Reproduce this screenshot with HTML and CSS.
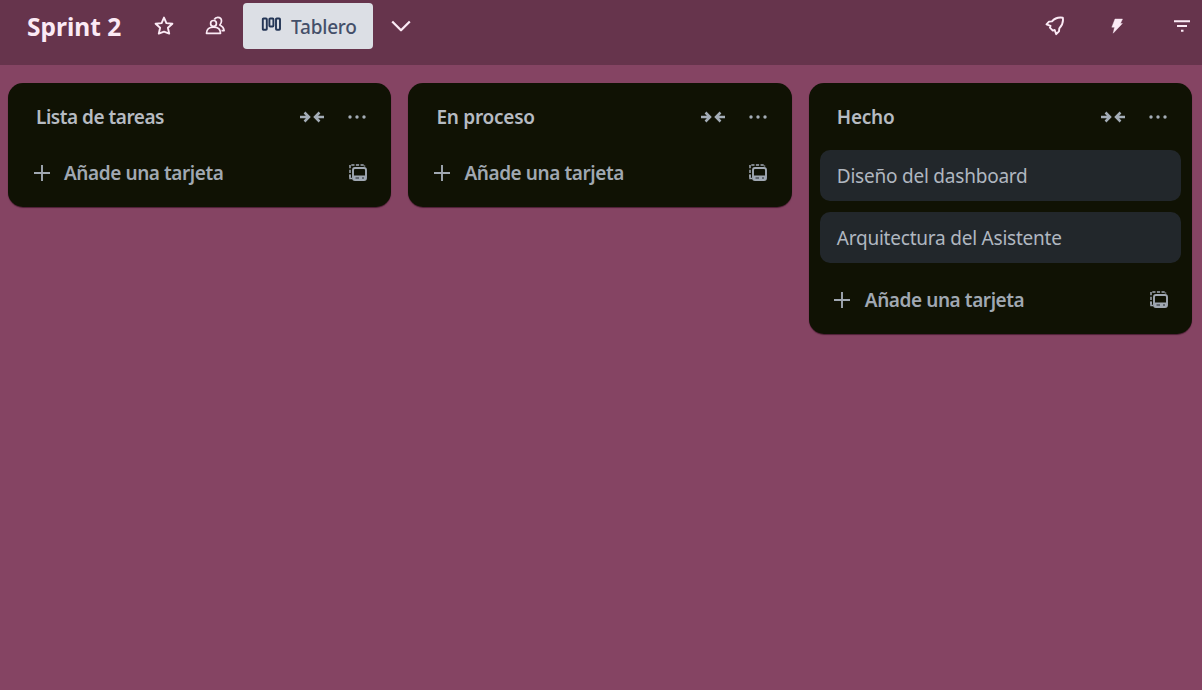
FILE: index.html
```html
<!DOCTYPE html>
<html lang="es">
<head>
<meta charset="utf-8">
<title>Sprint 2</title>
<link rel="stylesheet" href="styles.css">
</head>
<body>
<svg class="defs" width="0" height="0">
  <symbol id="collapse" viewBox="0 0 26 14"><path d="M1 7h9M5.500 2.500 10 7l-4.500 4.500M25 7h-9M20.500 2.500 16 7l4.500 4.500" fill="none" stroke="currentColor" stroke-width="2.5"/></symbol>
  <symbol id="more" viewBox="0 0 18 4"><circle cx="2" cy="2" r="1.7"/><circle cx="9" cy="2" r="1.7"/><circle cx="16" cy="2" r="1.7"/></symbol>
  <symbol id="plus" viewBox="0 0 18 18"><path d="M9 1v16M1 9h16" fill="none" stroke="currentColor" stroke-width="1.9"/></symbol>
  <symbol id="template" viewBox="0 0 18 18"><path d="M1 13.500V1h14.500v1.500" fill="none" stroke="currentColor" stroke-width="1.500" stroke-dasharray="3.200 1.400"/><path d="M1 11v3.500h2" fill="none" stroke="currentColor" stroke-width="1.500"/><rect x="4" y="4" width="13" height="12" rx="2" fill="none" stroke="currentColor" stroke-width="1.900"/><path d="M4.500 11.500h12.200v4.500H4.500z"/><path d="M6.500 14h3.500M13 14h2" stroke="#20252a" stroke-width="1.200"/></symbol>
</svg>
<header class="toolbar">
  <h1 class="board-title">Sprint 2</h1>
  <svg class="icon star" width="20" height="20" viewBox="0 0 20 20"><path d="m10 1.600 2.400 5.500 6 .6-4.500 4 1.300 5.900-5.200-2-5.200 2 1.300-5.900-4.500-4 6-.6z"/></svg>
  <svg class="icon people" width="20" height="20" viewBox="0 0 20 20"><circle cx="8.500" cy="7.400" r="2.900"/><path d="M1.500 17.300c0-4 2.800-6.200 7-6.200s7 2.200 7 6.200zM9.300 3.500C10 2.100 11.300 1.400 12.800 1.400c2.200 0 3.700 1.500 3.700 3.700 0 1.500-.6 2.800-1.700 3.900 2.600 1.200 4 3.200 4.300 5.700h-2.600"/></svg>
  <button class="view">
    <svg class="view-icon" width="20" height="16" viewBox="0 0 20 16"><g fill="none" stroke="currentColor" stroke-width="1.900"><rect x="1.800" y="1.500" width="4" height="11.200" rx=".8"/><rect x="8.400" y="1.500" width="4" height="8" rx=".8"/><rect x="15" y="1.500" width="4" height="11.200" rx=".8"/></g></svg>
    <span>Tablero</span>
  </button>
  <svg class="icon chevron" width="22" height="14" viewBox="0 0 22 14"><path d="m2.200 2.500 8.800 8.800 8.800-8.800"/></svg>
  <div class="tools">
    <svg class="icon rocket" width="20" height="20" viewBox="0 0 20 20"><path d="M17.800 1.700C13 1 9.600 2.300 7 5.400L4 5.600 1.500 8.300l4 1.600-.6 1.800 2.900 2.900 1.900-.6 1.500 4.200 2.800-2.900.3-3C17 9.500 18.700 6.500 17.800 1.700z"/></svg>
    <svg class="icon bolt" width="14" height="18" viewBox="0 0 14 18"><path d="M5 2h7.500L10.400 6.500h2L3.200 16.200l1.300-6H1.800z"/></svg>
    <svg class="icon filter" width="18" height="14" viewBox="0 0 18 14"><path d="M1 2.200h16M4 7h10M8 11.800h2.500"/></svg>
  </div>
</header>
<main class="board">
  <section class="list">
    <div class="list-head"><h2>Lista de tareas</h2><svg class="collapse"><use href="#collapse"/></svg><svg class="more"><use href="#more"/></svg></div>
    <div class="add"><svg class="plus"><use href="#plus"/></svg><span>Añade una tarjeta</span><svg class="template"><use href="#template"/></svg></div>
  </section>
  <section class="list">
    <div class="list-head"><h2 class="wide">En proceso</h2><svg class="collapse"><use href="#collapse"/></svg><svg class="more"><use href="#more"/></svg></div>
    <div class="add"><svg class="plus"><use href="#plus"/></svg><span>Añade una tarjeta</span><svg class="template"><use href="#template"/></svg></div>
  </section>
  <section class="list">
    <div class="list-head"><h2 class="wide">Hecho</h2><svg class="collapse"><use href="#collapse"/></svg><svg class="more"><use href="#more"/></svg></div>
    <div class="cards">
      <article class="card">Diseño del dashboard</article>
      <article class="card">Arquitectura del Asistente</article>
    </div>
    <div class="add"><svg class="plus"><use href="#plus"/></svg><span>Añade una tarjeta</span><svg class="template"><use href="#template"/></svg></div>
  </section>
</main>
</body>
</html>
```
FILE: styles.css
```css
* { box-sizing: border-box; }
body {
  margin: 0;
  height: 690px;
  overflow: hidden;
  background: #854463;
  font-family: "Noto Sans", "Open Sans", sans-serif;
}
svg { display: block; flex: none; fill: currentColor; }
.defs { position: absolute; }
h1, h2 { margin: 0; white-space: nowrap; }
.toolbar {
  display: flex;
  align-items: center;
  height: 65px;
  padding: 0 11px 13px 27px;
  background: #66344c;
  color: #fbeaf5;
}
.board-title {
  width: 127px;
  font-size: 24.5px;
  line-height: 34px;
  font-weight: 700;
  letter-spacing: 0;
  padding-top: 2px;
}
.icon { fill: none; stroke: currentColor; stroke-width: 1.9; stroke-linejoin: round; }
.people { margin-left: 31px; stroke-width: 1.7; }
.view {
  display: flex;
  align-items: center;
  gap: 10px;
  width: 130px;
  height: 46px;
  margin-left: 18px;
  padding: 0 0 0 18px;
  border: 0;
  border-radius: 4px;
  background: #dcdfe5;
  color: #243656;
  font: 500 19px/26px "Noto Sans", "Open Sans", sans-serif;
  letter-spacing: -0.2px;
}
.view-icon { margin-bottom: 2px; }
.view span { color: #44506a; padding-top: 1px; }
.chevron { margin-left: 17px; stroke-width: 2.3; }
.tools { display: flex; align-items: center; margin-left: auto; }
.bolt { margin-left: 45px; fill: currentColor; stroke-width: 0.4; }
.filter { margin-left: 49px; stroke-width: 2; }
.board { display: flex; align-items: flex-start; gap: 17px; padding: 17.6px 8px; }
.list {
  width: 383.4px;
  flex: none;
  padding: 12px 11px;
  border-radius: 15px;
  background: #101204;
  color: #b6bbc2;
  box-shadow: 0 1px 1px #4c2035;
}
.list-head { display: flex; align-items: center; height: 44px; padding: 0.5px 14px 0 17px; }
.list-head h2 { flex: 1; font-size: 19px; font-weight: 600; letter-spacing: -0.48px; }
.list-head .wide { letter-spacing: -0.25px; }
.collapse { width: 26px; height: 14px; color: #a4adb7; }
.more { width: 18px; height: 4px; margin-left: 23px; color: #a4adb7; }
.add {
  display: flex;
  align-items: center;
  height: 44px;
  margin-top: 12px;
  padding: 0 13.5px;
  color: #a0a8b2;
  font-size: 19px;
  font-weight: 600;
  letter-spacing: -0.42px;
}
.add span { flex: 1; margin-left: 13.5px; }
.plus, .template { width: 18px; height: 18px; }
.cards { display: flex; flex-direction: column; gap: 11px; margin-top: 11.5px; }
.cards + .add { margin-top: 14.5px; }
.card {
  height: 51px;
  padding: 0 17px;
  border-radius: 10px;
  background: #22272b;
  color: #b0b7c0;
  font-size: 19px;
  line-height: 52.5px;
  letter-spacing: -0.22px;
}
```
